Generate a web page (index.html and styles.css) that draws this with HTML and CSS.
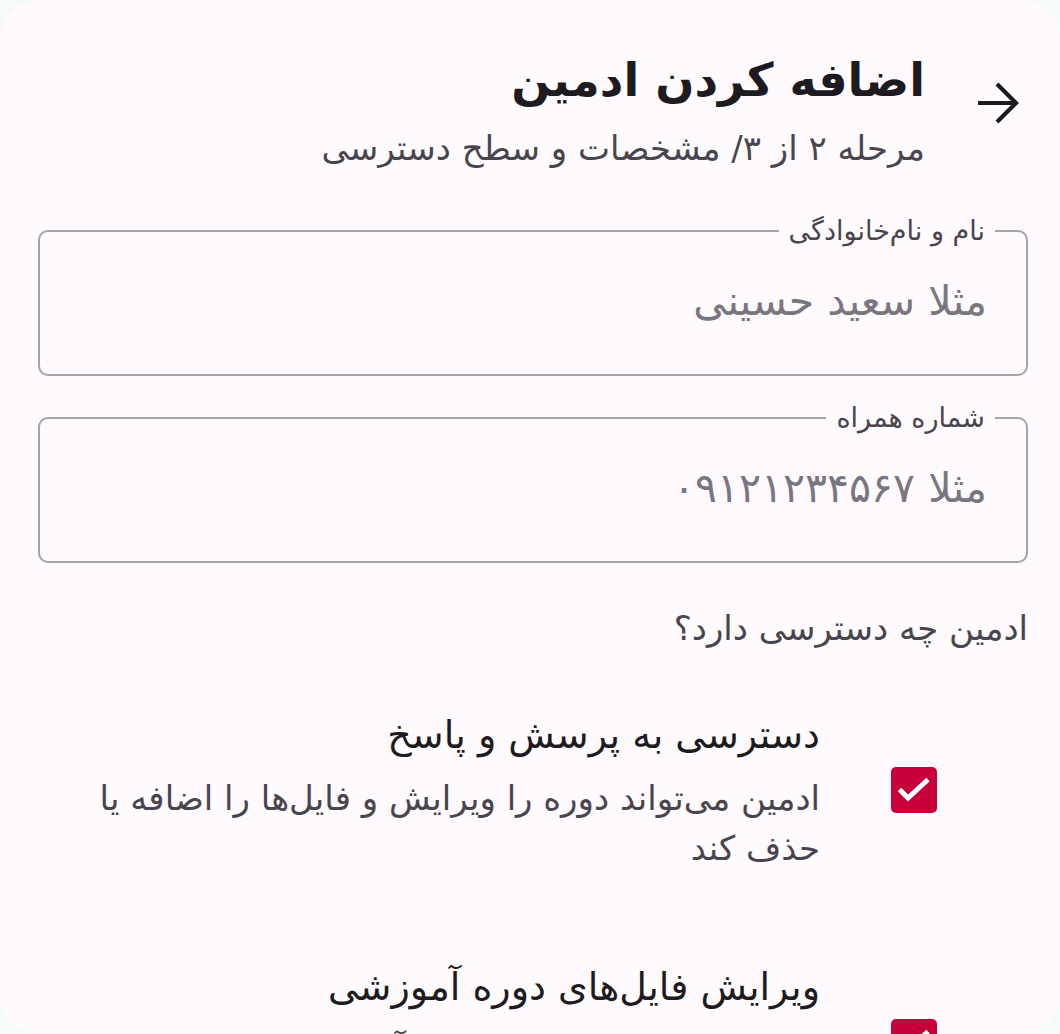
FILE: index.html
```html
<!DOCTYPE html>
<html lang="fa" dir="rtl">
<head>
<meta charset="utf-8">
<title>اضافه کردن ادمین</title>
<link rel="stylesheet" href="styles.css">
</head>
<body>
<div class="screen">
  <header class="header">
    <button class="back" aria-label="بازگشت">
      <svg width="44" height="44" viewBox="0 0 44 44"><path d="M2 22H40M21 3L40 22L21 41" fill="none" stroke="#1d1b20" stroke-width="4.2" stroke-linecap="butt" stroke-linejoin="miter"/></svg>
    </button>
    <div class="titles">
      <h1 class="title">اضافه کردن ادمین</h1>
      <p class="subtitle">مرحله ۲ از ۳/ مشخصات و سطح دسترسی</p>
    </div>
  </header>

  <fieldset class="field">
    <legend>نام و نام‌خانوادگی</legend>
    <input class="input" type="text" placeholder="مثلا سعید حسینی">
  </fieldset>

  <fieldset class="field">
    <legend>شماره همراه</legend>
    <input class="input" type="text" placeholder="مثلا ۰۹۱۲۱۲۳۴۵۶۷">
  </fieldset>

  <p class="question">ادمین چه دسترسی دارد؟</p>

  <div class="perm">
    <span class="check"><svg width="46" height="46" viewBox="0 0 46 46"><path d="M8.5 22.5L17 31L37 12.5" fill="none" stroke="#fff" stroke-width="5"/></svg></span>
    <div class="perm-text">
      <div class="perm-title">دسترسی به پرسش و پاسخ</div>
      <div class="perm-desc">ادمین می‌تواند دوره را ویرایش و فایل‌ها را اضافه یا حذف کند</div>
    </div>
  </div>

  <div class="perm">
    <span class="check"><svg width="46" height="46" viewBox="0 0 46 46"><path d="M8.5 22.5L17 31L37 12.5" fill="none" stroke="#fff" stroke-width="5"/></svg></span>
    <div class="perm-text">
      <div class="perm-title">ویرایش فایل‌های دوره آموزشی</div>
      <div class="perm-desc">ادمین می‌تواند فایل‌های دوره آموزشی را ویرایش یا حذف کند</div>
    </div>
  </div>
</div>
</body>
</html>
```

FILE: styles.css
```css
html, body {
  margin: 0;
  padding: 0;
  background: #f7fbf8;
}
body {
  font-family: "DejaVu Sans", "Noto Sans", sans-serif;
}
.screen {
  box-sizing: border-box;
  width: 1060px;
  height: 1034px;
  overflow: hidden;
  border-radius: 40px;
  background: #fefafd;
  direction: rtl;
  padding: 48px 32px 0 32px;
  color: #1d1b20;
}
.header {
  display: flex;
  align-items: flex-start;
  gap: 51px;
  padding-right: 8px;
}
.back {
  border: 0;
  background: transparent;
  padding: 0;
  margin-top: 33px;
  width: 44px;
  height: 44px;
}
.back svg { display: block; }
.titles {
  display: flex;
  flex-direction: column;
}
.title {
  margin: 0;
  font-size: 46px;
  line-height: 64px;
  font-weight: 700;
  color: #1d1b20;
}
.subtitle {
  margin: 12px 0 0;
  font-size: 34px;
  line-height: 48px;
  color: #49454f;
}
.field {
  margin: 44px 0 0 6px;
  padding: 30px 26px 48px 26px;
  border: 2px solid #a6a3ab;
  border-radius: 10px;
  min-inline-size: 0;
}
.field + .field { margin-top: 27px; }
.field legend {
  padding: 0 10px;
  margin-right: 5px;
  font-size: 27px;
  line-height: 30px;
  color: #49454f;
}
.input {
  display: block;
  box-sizing: border-box;
  width: 100%;
  height: 50px;
  border: 0;
  outline: none;
  background: transparent;
  font-family: inherit;
  font-size: 41px;
  line-height: 50px;
  color: #1d1b20;
  padding: 0 13px 0 13px;
  direction: rtl;
}
.input::placeholder { color: #79767f; }
.question {
  margin: 41px 0 0;
  font-size: 34px;
  line-height: 48px;
  color: #49454f;
}
.perm {
  display: flex;
  align-items: center;
  gap: 71px;
  margin-top: 55px;
  padding-right: 91px;
}
.perm + .perm { margin-top: 86px; }
.check {
  flex: none;
  width: 46px;
  height: 46px;
  border-radius: 5px;
  background: #c8003b;
}
.check svg { display: block; }
.perm-text {
  flex: 1;
  padding-left: 28px;
}
.perm-title {
  font-size: 38px;
  line-height: 56px;
  color: #1d1b20;
}
.perm-desc {
  margin-top: 10px;
  font-size: 34px;
  line-height: 50px;
  color: #49454f;
}
```
